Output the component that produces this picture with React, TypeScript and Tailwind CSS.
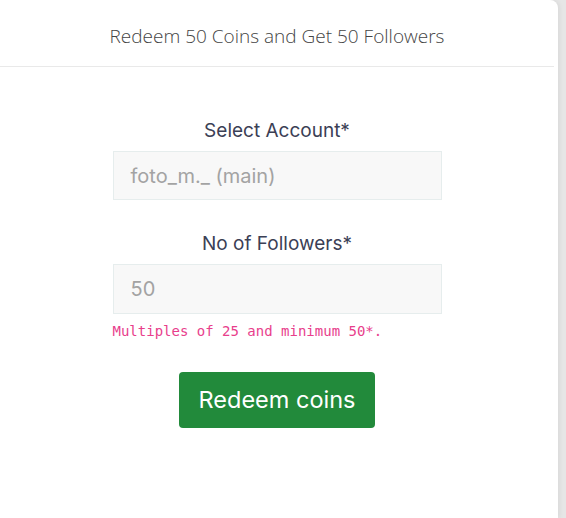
export default function App() {
  return (
    <div className="flex h-[518px] w-[566px] overflow-hidden bg-[#e6e6e6]">
      <div className="flex w-[558px] flex-col rounded-tr-lg bg-white pr-[4px] shadow-[2px_0_4px_rgba(0,0,0,0.05)]">
        <div className="flex h-[67px] items-center justify-center border-b border-[#e9e9e9]">
          <h5 className="pt-[6px] font-['Open_Sans',sans-serif] text-[19px] font-light text-[#444]">
            Redeem 50 Coins and Get 50 Followers
          </h5>
        </div>
        <div className="flex flex-col items-center pt-[52px] font-['Inter',sans-serif]">
          <label className="text-[19px] leading-6 text-[#3b4055]">Select Account*</label>
          <div className="mt-[8px] flex h-[49px] w-[329px] items-center border border-[#e6eded] bg-[#f8f8f8] px-[17px] text-[20px] text-[#a3a3a3]">
            foto_m._ (main)
          </div>
          <label className="mt-[32px] text-[19px] leading-6 text-[#3b4055]">No of Followers*</label>
          <div className="mt-[8px] flex h-[50px] w-[329px] items-center border border-[#e6eded] bg-[#f8f8f8] px-[17px] text-[20px] text-[#a3a3a3]">
            50
          </div>
          <p className="mt-[7px] w-[329px] font-['DejaVu_Sans_Mono',monospace] text-[14px] text-[#e83e8c]">
            Multiples of 25 and minimum 50*.
          </p>
          <button className="mt-[30px] h-[56px] w-[196px] rounded-[4px] bg-[#228a3b] text-[23.5px] text-white">
            Redeem coins
          </button>
        </div>
      </div>
    </div>
  )
}
